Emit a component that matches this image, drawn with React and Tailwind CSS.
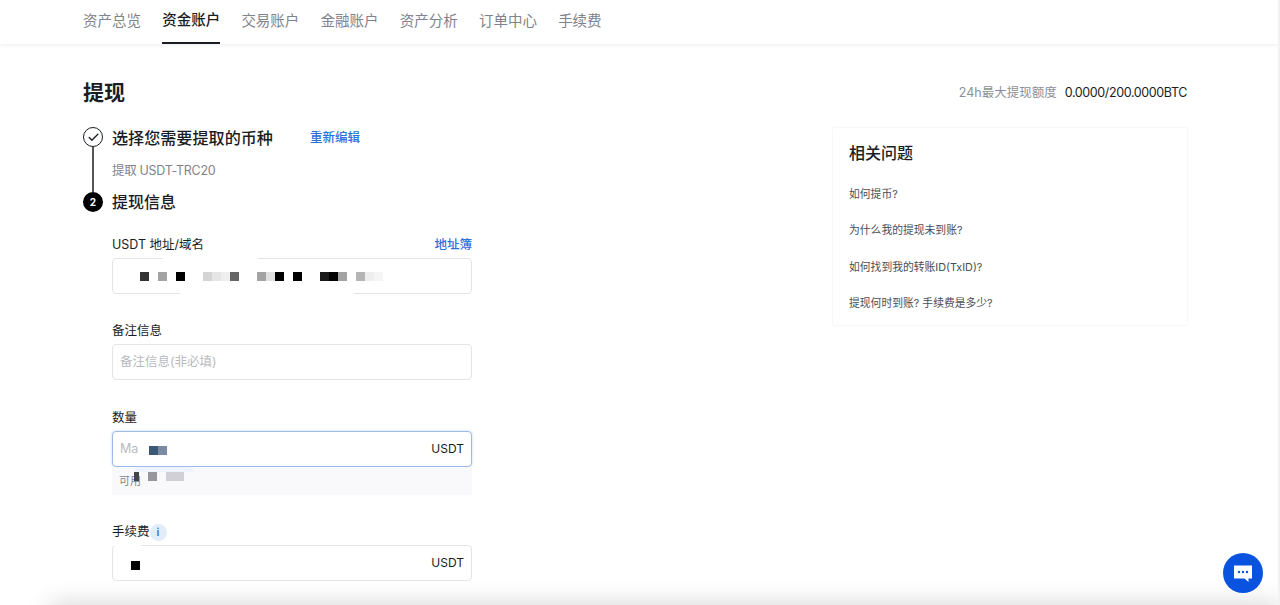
import { Check } from "lucide-react";

const FONT = { fontFamily: '"Inter", "Noto Sans CJK SC", sans-serif' };

const tabs = ["资产总览", "资金账户", "交易账户", "金融账户", "资产分析", "订单中心", "手续费"];
const questions = ["如何提币?", "为什么我的提现未到账?", "如何找到我的转账ID(TxID)?", "提现何时到账? 手续费是多少?"];

// pixelated redaction blocks, [width, colour]
const addressBlocks = [
  [9, "bg-[#333333]"], [9, "bg-white"], [9, "bg-[#a3a3a3]"], [9, "bg-white"], [9, "bg-black"], [18, "bg-white"],
  [9, "bg-[#d4d4d4]"], [9, "bg-[#e5e5e5]"], [9, "bg-[#eeeeee]"], [9, "bg-[#666666]"], [18, "bg-white"],
  [9, "bg-[#a3a3a3]"], [9, "bg-[#e0e0e0]"], [9, "bg-black"], [9, "bg-white"], [9, "bg-black"], [18, "bg-white"],
  [9, "bg-[#1a1a1a]"], [9, "bg-black"], [9, "bg-[#a3a3a3]"], [9, "bg-white"], [9, "bg-[#b5b5b5]"], [9, "bg-[#eeeeee]"], [9, "bg-[#f5f5f5]"],
];

function Pixels({ blocks, className }) {
  return (
    <div className={`absolute flex h-[9px] ${className}`}>
      {blocks.map(([w, c], i) => (
        <div key={i} className={`h-full ${c}`} style={{ width: w }} />
      ))}
    </div>
  );
}

function Field({ label, extra, focused, children }) {
  return (
    <div>
      <div className="flex h-[19px] items-center justify-between text-[12.5px] text-[#1a1d24]">
        <div className="flex items-center">{label}</div>
        {extra}
      </div>
      <div
        className={`relative mt-[3px] flex h-[36px] items-center rounded-[4px] border bg-white px-[7px] text-[12.5px] ${
          focused ? "border-[#9dbbe8] shadow-[0_0_3px_#c5d8f5]" : "border-[#e3e4e8]"
        }`}
      >
        {children}
      </div>
    </div>
  );
}

export default function App() {
  return (
    <div style={FONT} className="relative h-[605px] w-[1280px] overflow-hidden bg-white text-[#1a1d24]">
      <nav className="flex h-[44px] gap-[21.2px] px-[83px] shadow-[0_1px_4px_rgba(0,0,0,0.07)]">
        {tabs.map((t, i) => (
          <div
            key={t}
            className={`flex h-[44px] items-center pb-[3px] text-[14.5px] ${
              i === 1 ? "border-b-2 border-[#1a1d24] font-medium text-[#1a1d24]" : "text-[#7f838c]"
            }`}
          >
            {t}
          </div>
        ))}
      </nav>

      <main className="pl-[83px] pr-[93px]">
        <div className="flex h-[66px] items-center justify-between pt-[30px]">
          <h1 className="text-[21px] font-bold leading-none">提现</h1>
          <div className="mt-[3px] flex gap-2 text-[12.5px]">
            <span className="text-[#8c8f97]">24h最大提现额度</span>
            <span className="tracking-[-0.38px]">0.0000/200.0000BTC</span>
          </div>
        </div>

        <div className="flex items-start justify-between">
          <section className="mt-[10px] w-[389px]">
            <div className="relative flex h-[20px] items-center pt-[8px]">
              <div className="absolute left-[9px] top-[27px] h-[45px] w-[1.5px] bg-[#555555]" />
              <div className="absolute left-0 top-[7px] flex h-[20px] w-[20px] items-center justify-center rounded-full border-[1.25px] border-[#1a1d24]">
                <Check size={13} strokeWidth={2.4} />
              </div>
              <div className="ml-[29px] flex items-center pt-[8px]">
                <span className="text-[16.1px] font-medium leading-none">选择您需要提取的币种</span>
                <a className="ml-[37px] text-[12.5px] font-medium text-[#2a6fdb]">重新编辑</a>
              </div>
            </div>

            <div className="mt-[22px] pl-[29px] text-[12.5px] leading-[17px] tracking-[-0.3px] text-[#7f838c]">提取 USDT-TRC20</div>

            <div className="mt-[13px] flex h-[20px] items-center gap-[9px]">
              <div className="flex h-[20px] w-[20px] items-center justify-center rounded-full bg-black text-[10px] font-bold text-white">2</div>
              <span className="text-[16px] font-medium leading-none">提现信息</span>
            </div>

            <div className="mt-[24px] flex flex-col pl-[29px]">
              <Field label="USDT 地址/域名" extra={<a className="text-[12.5px] font-medium text-[#2a6fdb]">地址簿</a>}>
                <div className="absolute left-[50px] top-[-1px] h-[1px] w-[95px] bg-white" />
                <div className="absolute bottom-[-1px] left-[67px] h-[1px] w-[174px] bg-white" />
                <Pixels blocks={addressBlocks} className="left-[27px] top-[13px]" />
              </Field>

              <div className="mt-[28px]">
                <Field label="备注信息">
                  <span className="text-[#b8bac0]">备注信息(非必填)</span>
                </Field>
              </div>

              <div className="mt-[29px]">
                <Field label="数量" focused>
                  <span className="text-[#b8bac0]">Ma</span>
                  <span className="ml-auto text-[12px]">USDT</span>
                  <Pixels blocks={[[9, "bg-[#3d5878]"], [9, "bg-[#7a8ba3]"]]} className="left-[36px] top-[14px]" />
                </Field>
                <div className="relative flex h-[28px] items-center bg-[#f9f9fb] px-[7px] text-[11px] text-[#7f838c]">
                  可用
                  <div className="absolute left-[22px] top-0 h-[5px] w-[60px] rounded-t-full bg-[#eef3fb]" />
                  <Pixels
                    blocks={[[5, "bg-[#444444]"], [9, "bg-transparent"], [9, "bg-[#96969c]"], [9, "bg-transparent"], [18, "bg-[#d0d0d6]"]]}
                    className="left-[22px] top-[5px]"
                  />
                </div>
              </div>

              <div className="mt-[28px]">
                <Field
                  label={
                    <>
                      手续费
                      <span className="flex h-[17px] w-[17px] items-center justify-center rounded-full bg-[#e3ecfb] text-[11px] font-semibold text-[#3f6fc4]">i</span>
                    </>
                  }
                >
                  <span className="ml-auto text-[12px]">USDT</span>
                  <div className="absolute left-0 top-[-1px] h-[1px] w-[28px] bg-white" />
                  <Pixels blocks={[[9, "bg-black"]]} className="left-[18px] top-[15px]" />
                </Field>
              </div>
            </div>
          </section>

          <aside className="mt-[18px] h-[197px] w-[354px] px-[16px] pt-[16px] shadow-[0_0_2px_rgba(0,0,0,0.1)]">
            <h2 className="text-[16px] font-medium leading-[19px]">相关问题</h2>
            <ul className="mt-[23px] flex flex-col gap-[19.33px] text-[10.8px] leading-[17px] text-[#4a4d55]">
              {questions.map((q) => (
                <li key={q}>{q}</li>
              ))}
            </ul>
          </aside>
        </div>
      </main>

      {/* bottom page shadow */}
      <div className="absolute bottom-[-12px] left-[50px] right-0 h-[10px] shadow-[0_0_24px_rgba(0,0,0,0.3)]" />
      <div className="absolute bottom-0 right-0 top-0 w-[2px] bg-[#f2f2f2]" />

      <button className="absolute left-[1223px] top-[553px] flex h-[40px] w-[40px] items-center justify-center rounded-full bg-[#0a52e0]">
        <svg width="20" height="19" viewBox="0 0 20 19">
          <path d="M1 1.5h18v13h-3.5v3.5l-4-3.5H1z" fill="#fff" />
          <circle cx="6" cy="8" r="1.2" fill="#0a52e0" />
          <circle cx="10" cy="8" r="1.2" fill="#0a52e0" />
          <circle cx="14" cy="8" r="1.2" fill="#0a52e0" />
        </svg>
      </button>
    </div>
  );
}
